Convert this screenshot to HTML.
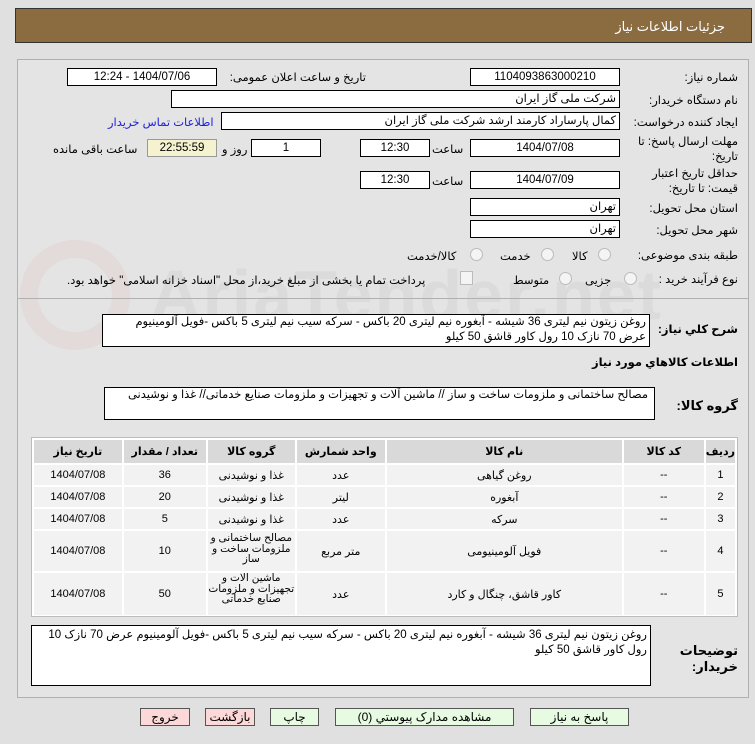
<!DOCTYPE html>
<html><head><meta charset="utf-8"><style>
body{margin:0;width:755px;height:744px;background:#e0e0e0;font-family:"Liberation Sans","DejaVu Sans",sans-serif;font-size:11.5px;position:relative;overflow:hidden;color:#000}
.a{position:absolute}
.hdr{left:15px;top:8px;width:737px;height:35px;background:#8b6b40;border:1px solid #333;color:#fff;font-size:13px;box-sizing:border-box}
.panel{left:17px;top:59px;width:732px;height:639px;border:1px solid #b0b0b0;background:#e4e4e4;box-sizing:border-box}
.box{position:absolute;background:#fff;border:1px solid #000;box-sizing:border-box;height:18px;line-height:16px;direction:rtl;padding:0 3px;white-space:nowrap;overflow:hidden}
.c{text-align:center}
.lbl{position:absolute;direction:rtl;white-space:nowrap}
.b{font-weight:bold}
table{border-collapse:separate;border-spacing:2px;direction:rtl}
td,th{background:#f2f2f2;text-align:center;font-size:11px;padding:0}
th{background:#d9d9d9;font-weight:bold;height:23px}
.g{font-size:10.5px;line-height:10.5px;overflow:hidden}
.btn{position:absolute;top:708px;height:18px;border:1px solid #555;box-sizing:border-box;text-align:center;line-height:16px;font-size:12px}
.rad{position:absolute;width:11px;height:11px;border-radius:50%;border:1px solid #bbb;background:#f4f4f4}
</style></head><body>
<div class="a hdr"><span class="a" style="right:26px;top:10px">جزئیات اطلاعات نیاز</span></div>
<div class="a panel"></div>
<div style="position:absolute;left:20px;top:240px;width:110px;height:110px;border-radius:50%;border:18px solid rgba(220,120,120,0.09);box-sizing:border-box"></div>
<div class="a" style="left:150px;top:255px;font-size:70px;font-weight:bold;color:rgba(160,160,160,0.12);letter-spacing:2px">AriaTender.net</div>

<div class="lbl" style="right:17px;top:70px">شماره نیاز:</div>
<div class="box c" style="left:470px;top:68px;width:150px">1104093863000210</div>
<div class="lbl" style="right:389px;top:70px">تاریخ و ساعت اعلان عمومی:</div>
<div class="box c" style="left:67px;top:68px;width:150px">1404/07/06 - 12:24</div>

<div class="lbl" style="right:17px;top:93px">نام دستگاه خریدار:</div>
<div class="box" style="left:171px;top:90px;width:449px">شرکت ملی گاز ایران</div>

<div class="lbl" style="right:17px;top:115px">ایجاد کننده درخواست:</div>
<div class="box" style="left:221px;top:112px;width:399px">کمال پارساراد کارمند ارشد شرکت ملی گاز ایران</div>
<div class="lbl" style="left:108px;top:115px;color:#2020e0">اطلاعات تماس خریدار</div>

<div class="lbl" style="right:17px;top:135px;width:108px;line-height:15px;white-space:normal">مهلت ارسال پاسخ: تا تاریخ:</div>
<div class="box c" style="left:470px;top:139px;width:150px">1404/07/08</div>
<div class="lbl" style="left:432px;top:142px">ساعت</div>
<div class="box c" style="left:360px;top:139px;width:70px">12:30</div>
<div class="box c" style="left:251px;top:139px;width:70px">1</div>
<div class="lbl" style="left:222px;top:142px">روز و</div>
<div class="box c" style="left:147px;top:139px;width:70px;background:#f5f2d0;border-color:#999">22:55:59</div>
<div class="lbl" style="left:53px;top:142px">ساعت باقی مانده</div>

<div class="lbl" style="right:17px;top:167px;width:108px;line-height:15px;white-space:normal">حداقل تاریخ اعتبار قیمت: تا تاریخ:</div>
<div class="box c" style="left:470px;top:171px;width:150px">1404/07/09</div>
<div class="lbl" style="left:432px;top:174px">ساعت</div>
<div class="box c" style="left:360px;top:171px;width:70px">12:30</div>

<div class="lbl" style="right:17px;top:201px">استان محل تحویل:</div>
<div class="box" style="left:470px;top:198px;width:150px">تهران</div>
<div class="lbl" style="right:17px;top:223px">شهر محل تحویل:</div>
<div class="box" style="left:470px;top:220px;width:150px">تهران</div>

<div class="lbl" style="right:17px;top:248px">طبقه بندی موضوعی:</div>
<div class="rad" style="left:598px;top:248px"></div><div class="lbl" style="left:572px;top:249px">کالا</div>
<div class="rad" style="left:541px;top:248px"></div><div class="lbl" style="left:500px;top:249px">خدمت</div>
<div class="rad" style="left:470px;top:248px"></div><div class="lbl" style="left:407px;top:249px">کالا/خدمت</div>

<div class="lbl" style="right:17px;top:272px">نوع فرآیند خرید :</div>
<div class="rad" style="left:624px;top:272px"></div><div class="lbl" style="left:585px;top:273px">جزیی</div>
<div class="rad" style="left:559px;top:272px"></div><div class="lbl" style="left:513px;top:273px">متوسط</div>
<div class="a" style="left:460px;top:271px;width:11px;height:12px;border:1px solid #bbb;background:#f4f4f4"></div>
<div class="lbl" style="left:67px;top:273px">پرداخت تمام یا بخشی از مبلغ خرید،از محل "اسناد خزانه اسلامی" خواهد بود.</div>

<div class="a" style="left:17px;top:298px;width:732px;border-top:1px solid #b0b0b0"></div>

<div class="lbl b" style="right:17px;top:322px">شرح کلي نیاز:</div>
<div class="box" style="left:102px;top:314px;width:548px;height:33px;white-space:normal;line-height:15px">روغن زیتون نیم لیتری 36 شیشه - آبغوره نیم لیتری 20 باکس - سرکه سیب نیم لیتری 5 باکس -فویل آلومینیوم عرض 70 نازک 10 رول کاور قاشق 50 کیلو</div>
<div class="lbl b" style="right:17px;top:355px">اطلاعات کالاهاي مورد نیاز</div>

<div class="lbl b" style="right:17px;top:398px;font-size:13px">گروه کالا:</div>
<div class="box" style="left:104px;top:387px;width:551px;height:33px;white-space:normal;line-height:15px;padding-right:6px">مصالح ساختمانی و ملزومات ساخت و ساز // ماشین آلات و تجهیزات و ملزومات صنایع خدماتی// غذا و نوشیدنی</div>

<div class="a" style="left:31px;top:437px;width:707px;height:180px;border:1px solid #bbb;box-sizing:border-box;background:#fff;overflow:hidden">
<table style="width:705px;margin:0">
<tr><th style="width:26px">ردیف</th><th style="width:80px">کد کالا</th><th style="width:235px">نام کالا</th><th style="width:88px">واحد شمارش</th><th style="width:87px">گروه کالا</th><th style="width:82px">تعداد / مقدار</th><th>تاریخ نیاز</th></tr>
<tr style="height:20px"><td>1</td><td>--</td><td>روغن گیاهی</td><td>عدد</td><td>غذا و نوشیدنی</td><td>36</td><td>1404/07/08</td></tr>
<tr style="height:20px"><td>2</td><td>--</td><td>آبغوره</td><td>لیتر</td><td>غذا و نوشیدنی</td><td>20</td><td>1404/07/08</td></tr>
<tr style="height:20px"><td>3</td><td>--</td><td>سرکه</td><td>عدد</td><td>غذا و نوشیدنی</td><td>5</td><td>1404/07/08</td></tr>
<tr style="height:40px"><td>4</td><td>--</td><td>فویل آلومینیومی</td><td>متر مربع</td><td><div class="g" style="height:40px;padding-top:2px;box-sizing:border-box">مصالح ساختمانی و ملزومات ساخت و ساز</div></td><td>10</td><td>1404/07/08</td></tr>
<tr style="height:40px"><td>5</td><td>--</td><td>کاور قاشق، چنگال و کارد</td><td>عدد</td><td><div class="g" style="height:42px">ماشین آلات و تجهیزات و ملزومات صنایع خدماتی</div></td><td>50</td><td>1404/07/08</td></tr>
</table></div>

<div class="box" style="left:31px;top:625px;width:620px;height:61px;white-space:normal;line-height:15px;padding-top:2px">روغن زیتون نیم لیتری 36 شیشه - آبغوره نیم لیتری 20 باکس - سرکه سیب نیم لیتری 5 باکس -فویل آلومینیوم عرض 70 نازک 10 رول کاور قاشق 50 کیلو</div>
<div class="lbl b" style="right:17px;top:643px;width:55px;white-space:normal;line-height:16px;font-size:13px">توضیحات خریدار:</div>

<div class="btn" style="left:140px;width:50px;background:#fcd8d8">خروج</div>
<div class="btn" style="left:205px;width:50px;background:#fcd8d8">بازگشت</div>
<div class="btn" style="left:270px;width:49px;background:#e6fbe2">چاپ</div>
<div class="btn" style="left:335px;width:179px;background:#e6fbe2">مشاهده مدارک پیوستي (0)</div>
<div class="btn" style="left:530px;width:99px;background:#e6fbe2">پاسخ به نیاز</div>
</body></html>
